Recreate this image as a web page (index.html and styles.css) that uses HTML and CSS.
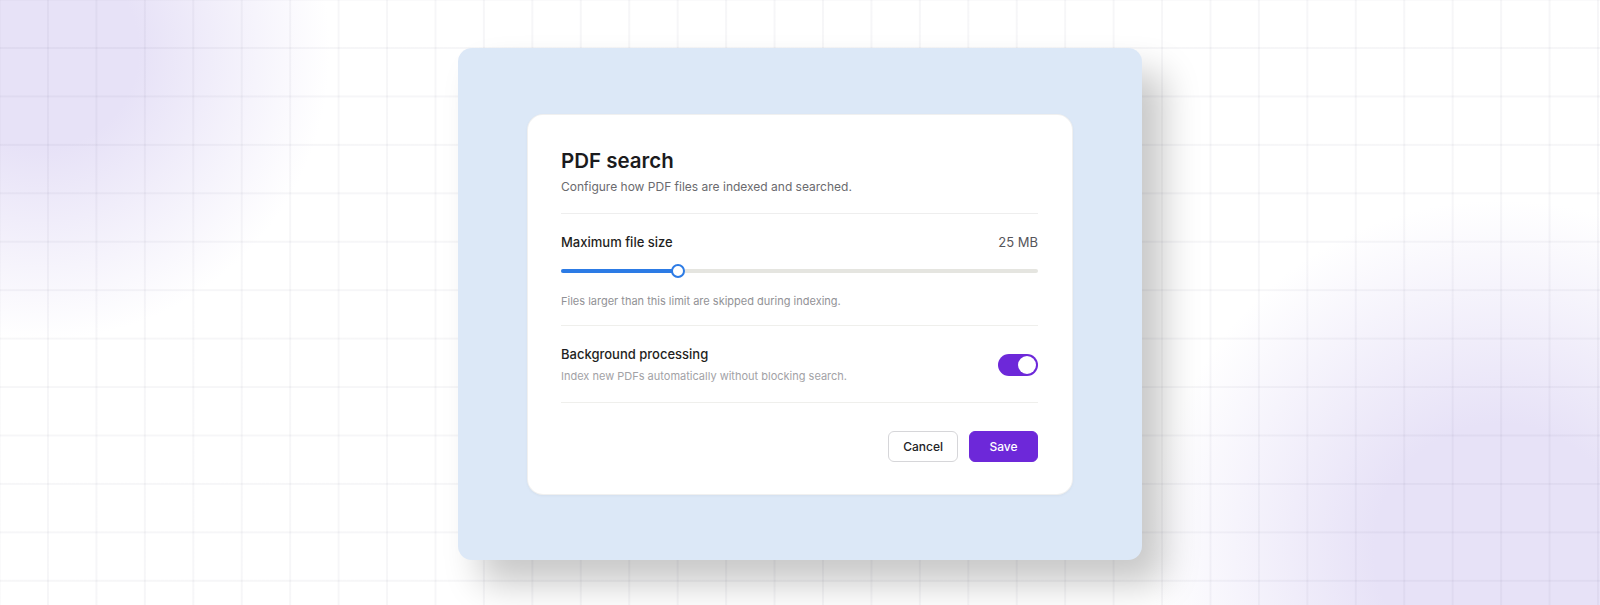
FILE: index.html
```html
<!DOCTYPE html>
<html lang="en">
<head>
    <meta charset="UTF-8">
    <meta name="viewport" content="width=device-width, initial-scale=1.0">
    <title>PDF search settings</title>
    <link rel="stylesheet" href="styles.css">
</head>
<body>
    <div class="stage">
        <div class="panel">
            <section class="card">
                <header class="card-head">
                    <h1>PDF search</h1>
                    <p>Configure how PDF files are indexed and searched.</p>
                </header>

                <div class="setting setting-size">
                    <div class="setting-row">
                        <span class="label">Maximum file size</span>
                        <span class="value">25 MB</span>
                    </div>
                    <div class="slider">
                        <div class="slider-track">
                            <div class="slider-fill" style="width: 24.6%"></div>
                        </div>
                        <span class="slider-thumb" style="left: 24.6%"></span>
                    </div>
                    <p class="hint">Files larger than this limit are skipped during indexing.</p>
                </div>

                <div class="setting setting-toggle">
                    <div class="setting-text">
                        <span class="label">Background processing</span>
                        <p class="hint hint-soft">Index new PDFs automatically without blocking search.</p>
                    </div>
                    <button class="switch is-on" aria-pressed="true" aria-label="Background processing"></button>
                </div>

                <footer class="card-actions">
                    <button class="btn btn-ghost">Cancel</button>
                    <button class="btn btn-primary">Save</button>
                </footer>
            </section>
        </div>
    </div>
</body>
</html>
```

FILE: styles.css
```css
body {
    margin: 0;
    height: 605px;
    overflow: hidden;
    font-family: Inter, "Noto Sans", sans-serif;
    background-color: #fff;
    background-image:
        linear-gradient(to right, rgba(30, 30, 70, 0.04) 1.5px, transparent 1.5px),
        linear-gradient(to bottom, rgba(30, 30, 70, 0.04) 1.5px, transparent 1.5px),
        radial-gradient(circle 290px at 40px 50px, #e7e2f7 34%, rgba(231, 226, 247, 0) 100%),
        radial-gradient(circle 350px at 1500px 550px, #e7e2f7 36%, rgba(231, 226, 247, 0) 100%);
    background-size: 48.45px 48.45px, 48.45px 48.45px, 100% 100%, 100% 100%;
    background-position: 47px 0, 0 47px, 0 0, 0 0;
    background-repeat: repeat, repeat, no-repeat, no-repeat;
}

.stage {
    display: flex;
    justify-content: center;
    padding-top: 48px;
}

.panel {
    width: 684px;
    height: 512px;
    box-sizing: border-box;
    padding-top: 66px;
    border-radius: 14px;
    background-color: #dce8f7;
    box-shadow: 22px 24px 36px rgba(0, 0, 0, 0.22);
    display: flex;
    align-items: flex-start;
    justify-content: center;
}

.card {
    width: 546px;
    box-sizing: border-box;
    padding: 32px 34px 32px 33px;
    background-color: #fff;
    border: 1px solid rgba(0, 0, 0, 0.06);
    border-radius: 16px;
    box-shadow: 0 1px 3px rgba(0, 0, 0, 0.04);
}

/* header */

.card-head {
    padding-bottom: 16px;
    border-bottom: 1px solid #eeeeee;
}

.card-head h1 {
    margin: 0;
    font-size: 20.5px;
    line-height: 28px;
    font-weight: 600;
    color: #1b1b1d;
}

.card-head p {
    margin: 2px 0 0;
    font-size: 12px;
    line-height: 20px;
    color: #6a6a6e;
}

/* settings */

.setting {
    border-bottom: 1px solid #efefec;
}

.setting-size {
    padding: 18px 0 15px;
}

.setting-toggle {
    padding: 18px 0 17px;
    display: flex;
    align-items: center;
    justify-content: space-between;
}

.setting-row {
    display: flex;
    justify-content: space-between;
}

.label {
    display: block;
    font-size: 13px;
    line-height: 20px;
    font-weight: 500;
    color: #1f1f22;
}

.value {
    font-size: 13px;
    line-height: 20px;
    color: #55555a;
}

.hint {
    margin: 14px 0 0;
    font-size: 11px;
    line-height: 18px;
    color: #929296;
}

.hint-soft {
    margin-top: 3px;
    color: #a2a2a6;
}

/* slider */

.slider {
    position: relative;
    height: 14px;
    margin-top: 12px;
    display: flex;
    align-items: center;
}

.slider-track {
    flex: 1;
    height: 4px;
    border-radius: 2px;
    background-color: #e5e5e0;
}

.slider-fill {
    height: 100%;
    border-radius: 2px;
    background-color: #2c7be5;
}

.slider-thumb {
    position: absolute;
    top: 0;
    width: 14px;
    height: 14px;
    margin-left: -7px;
    box-sizing: border-box;
    border: 2px solid #2c7be5;
    border-radius: 50%;
    background-color: #fff;
}

/* toggle switch */

.switch {
    position: relative;
    width: 40px;
    height: 22px;
    padding: 0;
    border: none;
    border-radius: 11px;
    background-color: #d4d4d8;
    cursor: pointer;
}

.switch::after {
    content: "";
    position: absolute;
    top: 2px;
    left: 2px;
    width: 18px;
    height: 18px;
    border-radius: 50%;
    background-color: #fff;
}

.switch.is-on {
    background-color: #6d28d9;
}

.switch.is-on::after {
    left: 20px;
}

/* actions */

.card-actions {
    display: flex;
    justify-content: flex-end;
    gap: 11px;
    padding-top: 28px;
}

.btn {
    height: 31px;
    min-width: 69px;
    padding: 0 14px;
    box-sizing: border-box;
    border-radius: 6px;
    font-family: inherit;
    font-size: 12px;
    font-weight: 500;
    cursor: pointer;
}

.btn-ghost {
    background-color: #fff;
    border: 1px solid #d6d6d9;
    color: #222226;
}

.btn-primary {
    background-color: #6d28d9;
    border: 1px solid #6d28d9;
    color: #fff;
}

.btn-primary:hover {
    background-color: #5b21b6;
}
```
